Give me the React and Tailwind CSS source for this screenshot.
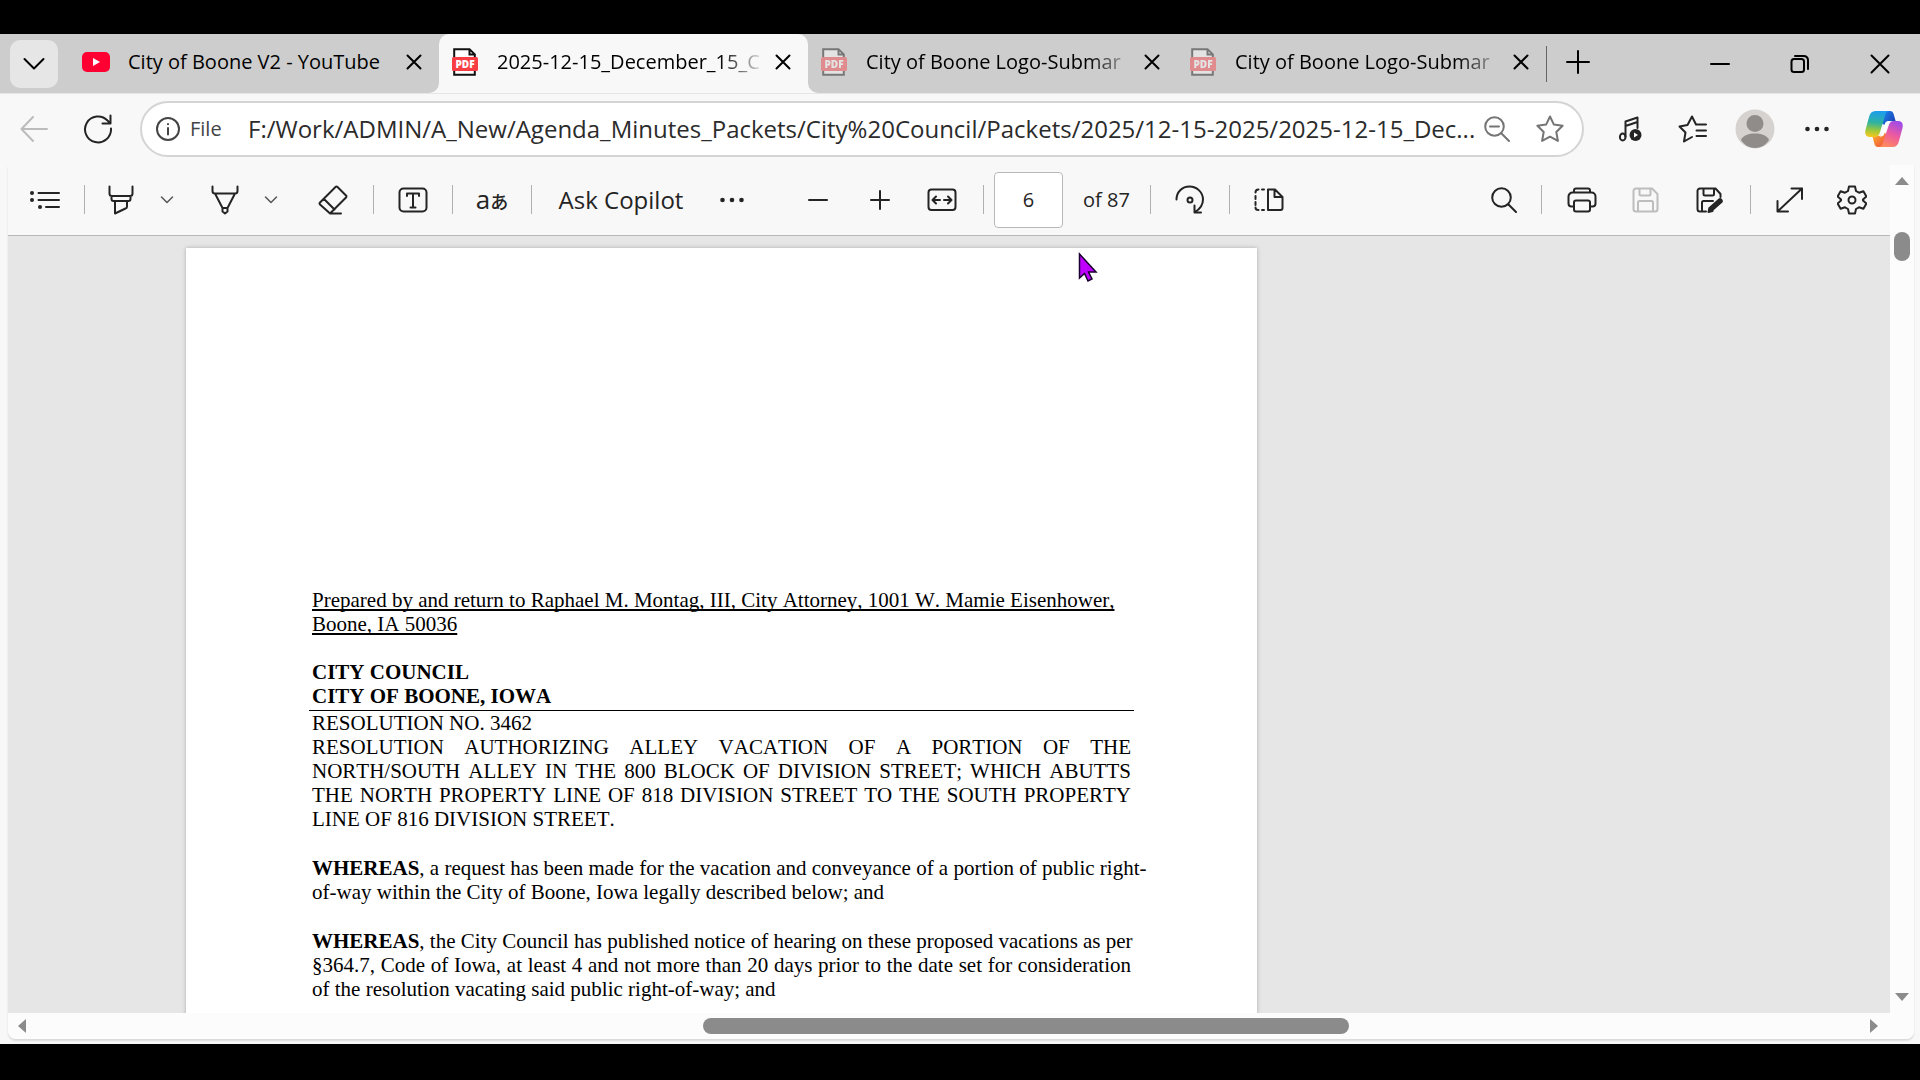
const Icon = ({ w = 28, h = 28, stroke = 2, className = "", children }) => (
  <svg
    width={w}
    height={h}
    viewBox={`0 0 ${w} ${h}`}
    fill="none"
    stroke="currentColor"
    strokeWidth={stroke}
    strokeLinecap="round"
    strokeLinejoin="round"
    className={`shrink-0 ${className}`}
    aria-hidden="true"
  >
    {children}
  </svg>
);

const CloseIcon = () => (
  <Icon w={16} h={16}>
    <path d="M1.5 1.5 14.5 14.5M14.5 1.5 1.5 14.5" />
  </Icon>
);

const ChevronIcon = () => (
  <Icon w={14} h={10} stroke={1.5} className="text-[#555]">
    <path d="M1.5 2 7 7.5 12.5 2" />
  </Icon>
);

const DotsIcon = () => (
  <Icon w={24} h={6}>
    <g fill="currentColor" stroke="none">
      <circle cx="2.5" cy="3" r="2.3" />
      <circle cx="12" cy="3" r="2.3" />
      <circle cx="21.5" cy="3" r="2.3" />
    </g>
  </Icon>
);

const StarIcon = () => (
  <Icon w={28} h={28}>
    <path d="m14 1.5 3.9 8.1 8.7 1.2-6.3 6.2 1.6 8.9-7.9-4.2-7.9 4.2 1.6-8.9-6.3-6.2 8.700-1.200z" />
  </Icon>
);

const SaveIcon = ({ editing }) => (
  <Icon w={28} h={26}>
    {editing ? (
      <>
        <path d="M24.500 10V7L19.500 1.500H4a2.500 2.500 0 0 0-2.500 2.500v18A2.500 2.500 0 0 0 4 24.500h6M7.500 1.500V7A1.500 1.500 0 0 0 9 8.500h7.500A1.500 1.500 0 0 0 18 7V1.500M6 24V15.500A1.500 1.500 0 0 1 7.500 14H17" />
        <path d="m15.500 21.500 8.500-7.500" strokeWidth="5.500" />
        <path d="m12.500 25 1-4 3 3z" fill="currentColor" />
      </>
    ) : (
      <path d="M4 24.500h19a2.500 2.500 0 0 0 2.500-2.500V7L20 1.500H4A2.500 2.500 0 0 0 1.500 4v18A2.500 2.500 0 0 0 4 24.500zM7.500 1.500V7A1.500 1.500 0 0 0 9 8.500h8A1.500 1.500 0 0 0 18.500 7V1.500M6 24.500V15.500A1.500 1.500 0 0 1 7.500 14h12a1.500 1.500 0 0 1 1.500 1.500v9" />
    )}
  </Icon>
);

const YouTubeIcon = () => (
  <svg width="28" height="20" viewBox="0 0 28 20" aria-hidden="true">
    <rect width="28" height="20" rx="5" fill="#ff0033" />
    <path d="M11 6v8l7-4z" fill="#fff" />
  </svg>
);

const PdfIcon = ({ faded }) => (
  <svg width="28" height="28" viewBox="0 0 28 28" aria-hidden="true" className={faded ? "opacity-45" : ""}>
    <path d="M3.200 1.200h15.300l5.300 5.300v20.300H3.200z" fill="#fff" stroke="#111" strokeWidth="2" />
    <path d="M17.500 1v6.500h7z" fill="#111" />
    <path d="M19.500 3.500v2h2z" fill="#fff" />
    <rect x="1" y="9" width="26" height="14" rx="1.500" fill="#f83e44" />
    <text
      x="14"
      y="19.500"
      textAnchor="middle"
      fontSize="10"
      fontWeight="800"
      fontFamily="'Open Sans', sans-serif"
      fill="#fff"
    >
      PDF
    </text>
  </svg>
);

const CopilotIcon = () => (
  <svg width="38" height="36" viewBox="0 0 38 36" aria-hidden="true">
    <defs>
      <linearGradient id="cpLeft" x1="0.5" y1="0" x2="0.4" y2="1">
        <stop offset="0" stopColor="#1b9df0" />
        <stop offset="0.45" stopColor="#2fb3a0" />
        <stop offset="0.75" stopColor="#9cc83c" />
        <stop offset="1" stopColor="#f5c81e" />
      </linearGradient>
      <linearGradient id="cpTop" x1="0" y1="0" x2="1" y2="0.6">
        <stop offset="0" stopColor="#1a8df5" />
        <stop offset="1" stopColor="#1b46b8" />
      </linearGradient>
      <linearGradient id="cpRight" x1="0.7" y1="0" x2="0.3" y2="1">
        <stop offset="0" stopColor="#a04be8" />
        <stop offset="0.5" stopColor="#ec5aa0" />
        <stop offset="1" stopColor="#ff8a5c" />
      </linearGradient>
      <linearGradient id="cpBottom" x1="0" y1="0" x2="1" y2="1">
        <stop offset="0" stopColor="#ffb52e" />
        <stop offset="1" stopColor="#ee4a3a" />
      </linearGradient>
    </defs>
    <path d="M18 0h7c2 0 3 1 3.600 3l2 7h-6c-3 0-4 1-5 4l-4-2z" fill="url(#cpTop)" />
    <path d="M20 36h-7c-2 0-3-1-3.600-3l-2-8h6c3 0 4-1 5-4l3 2z" fill="url(#cpBottom)" />
    <path d="M10.500 0H24c-2.200 0-3.200 2-4 4.700L15 21c-.8 3-2.300 5-5 5H5c-4 0-5.500-3-4.500-7L4 6c1-4 3-6 6.500-6z" fill="url(#cpLeft)" />
    <path d="M27.500 36H14c2.200 0 3.200-2 4-4.700L23.500 15c.8-3 2.300-5 5-5H33c4 0 5.500 3 4.500 7L34 30c-1 4-3 6-6.500 6z" fill="url(#cpRight)" />
    <path d="M20 12.500c1-2 2-2.500 5-2.500-1.500 1-2 2.500-2.500 4L19 23.500c-.7 1.500-1.500 2-4.500 2 1.500-1 2-2.500 2.500-4z" fill="#fff" />
  </svg>
);

const Divider = ({ tight }) => (
  <span className={`h-[29px] w-px shrink-0 bg-[#b0b0b0] ${tight ? "mx-2" : "mx-[10px]"}`} />
);

const ToolButton = ({ label, width = "w-[58px]", className = "", children }) => (
  <button
    type="button"
    aria-label={label}
    className={`flex h-12 shrink-0 items-center justify-center ${width} ${className}`}
  >
    {children}
  </button>
);

const tabs = [
  { title: "City of Boone V2 - YouTube", icon: "youtube" },
  { title: "2025-12-15_December_15_C", icon: "pdf", active: true, clipped: true },
  { title: "City of Boone Logo-Submar", icon: "pdf", clipped: true },
  { title: "City of Boone Logo-Submar", icon: "pdf", clipped: true },
];

const Tab = ({ tab }) => (
  <div
    className={`relative flex w-[369px] min-w-0 items-center pb-1 pl-3 ${
      tab.active ? "rounded-t-[10px] bg-[#f8f8f8]" : ""
    }`}
  >
    {tab.active && (
      <>
        <svg className="absolute bottom-0 -left-[10px]" width="10" height="10" viewBox="0 0 10 10">
          <path d="M10 0v10H0A10 10 0 0 0 10 0z" fill="#f8f8f8" />
        </svg>
        <svg className="absolute -right-[10px] bottom-0" width="10" height="10" viewBox="0 0 10 10">
          <path d="M0 0v10h10A10 10 0 0 1 0 0z" fill="#f8f8f8" />
        </svg>
      </>
    )}
    <span className="flex w-7 shrink-0 justify-center">
      {tab.icon === "youtube" ? <YouTubeIcon /> : <PdfIcon faded={!tab.active} />}
    </span>
    <span
      className={`ml-[18px] w-[262px] overflow-hidden whitespace-nowrap text-xl ${
        tab.clipped ? "[mask-image:linear-gradient(to_right,black_222px,transparent_270px)]" : ""
      }`}
    >
      {tab.title}
    </span>
    <button type="button" aria-label="Close tab" className="ml-3 flex h-6 w-6 shrink-0 items-center justify-center">
      <CloseIcon />
    </button>
  </div>
);

const TabStrip = () => (
  <div className="flex h-[59px] shrink-0 bg-[#cdcdcd] text-black">
    <button
      type="button"
      aria-label="Tab actions"
      className="mt-1.5 mr-3 ml-2.5 flex h-12 w-12 shrink-0 items-center justify-center rounded-[10px] bg-[#e6e6e6]"
    >
      <Icon w={22} h={14}>
        <path d="M1.500 2 11 11.500 20.500 2" />
      </Icon>
    </button>
    {tabs.map((tab, i) => (
      <Tab key={i} tab={tab} />
    ))}
    <button type="button" aria-label="New tab" className="relative flex w-16 shrink-0 items-center justify-center pb-1">
      <span className="absolute top-3 left-0 h-9 w-px bg-[#666]" />
      <Icon w={24} h={24}>
        <path d="M12 1v22M1 12h22" />
      </Icon>
    </button>
    <div className="ml-auto flex">
      <button type="button" aria-label="Minimize" className="flex w-20 items-center justify-center">
        <Icon w={20} h={20}>
          <path d="M1 10h18" />
        </Icon>
      </button>
      <button type="button" aria-label="Restore" className="flex w-20 items-center justify-center">
        <Icon w={20} h={20}>
          <rect x="1.500" y="5" width="12.500" height="13" rx="2.500" />
          <path d="M5 2h8.500c3 0 4.500 1.500 4.500 4.500V15" />
        </Icon>
      </button>
      <button type="button" aria-label="Close" className="flex w-20 items-center justify-center">
        <Icon w={20} h={20}>
          <path d="M1.500 1.500 18.500 18.500M18.500 1.500 1.500 18.500" />
        </Icon>
      </button>
    </div>
  </div>
);

const AddressRow = () => (
  <div className="flex h-[72px] shrink-0 items-center border-t border-[#e6e6e6] pb-0.5 pl-0.5">
    <ToolButton label="Back" width="w-16" className="text-[#bcbcbc]">
      <Icon w={28} h={26}>
        <path d="M13 1 1.500 13 13 25M1.500 13H27" />
      </Icon>
    </ToolButton>
    <ToolButton label="Refresh" width="w-16">
      <Icon w={30} h={30}>
        <path d="M28 14.500A13 13 0 1 1 24.500 6.500L27.500 9.500M27.500 1.500v8h-8" />
      </Icon>
    </ToolButton>
    <div className="ml-[10px] flex h-14 min-w-0 flex-1 items-center rounded-full border-2 border-[#d4d4d4] bg-white pl-[14px]">
      <Icon w={24} h={24} className="text-[#444]">
        <circle cx="12" cy="12" r="11" />
        <path d="M12 11v6.500M12 7v.2" />
      </Icon>
      <label htmlFor="url" className="w-[68px] shrink-0 pl-[10px] text-xl font-medium text-[#444]">
        File
      </label>
      <input
        id="url"
        className="min-w-0 flex-1 bg-transparent text-2xl text-[#2b2b2b] outline-none"
        defaultValue="F:/Work/ADMIN/A_New/Agenda_Minutes_Packets/City%20Council/Packets/2025/12-15-2025/2025-12-15_Dec..."
      />
      <ToolButton label="Zoom" width="w-[42px]" className="text-[#757575]">
        <Icon w={26} h={26}>
          <circle cx="10.500" cy="10.500" r="9.300" />
          <path d="M17.500 17.500 25 25M6 10.500h9" />
        </Icon>
      </ToolButton>
      <ToolButton label="Add to favorites" width="w-16" className="text-[#757575]">
        <StarIcon />
      </ToolButton>
    </div>
    <ToolButton label="Media" width="w-[62px]" className="ml-4">
      <Icon w={24} h={26}>
        <path d="M6.500 20.500V5.500L18.500 1.500V12M6.500 10 18.500 6" />
        <ellipse cx="3.700" cy="21" rx="2.800" ry="3.500" />
        <circle cx="16.500" cy="19" r="6" fill="currentColor" stroke="none" />
        <path d="M15 16.500v5l4-2.500z" fill="#fff" stroke="none" />
      </Icon>
    </ToolButton>
    <ToolButton label="Favorites" width="w-[62px]">
      <Icon w={30} h={28}>
        <path d="M14 22 6 26.500 7.500 17.500 1.500 11.500 9.500 10 14 1.500 18 9.500H28M18.500 15.500H28M18.500 21H28" />
      </Icon>
    </ToolButton>
    <ToolButton label="Profile" width="w-[62px]">
      <svg width="40" height="40" viewBox="0 0 40 40" aria-hidden="true">
        <circle cx="20" cy="20" r="19.500" fill="#d5d2d0" />
        <circle cx="20" cy="14.500" r="8.500" fill="#8f8c8a" />
        <path d="M6 31c2-5 8-6.500 14-6.500S32 26 34 31c-3 5-8.500 8-14 8S9 36 6 31z" fill="#8f8c8a" />
      </svg>
    </ToolButton>
    <ToolButton label="Settings and more" width="w-[62px]">
      <DotsIcon />
    </ToolButton>
    <ToolButton label="Copilot" width="w-[72px]">
      <CopilotIcon />
    </ToolButton>
  </div>
);

const PdfToolbar = () => (
  <div className="flex h-[71px] shrink-0 items-center border-b border-[#b8b8b8] pr-[7px] pb-px pl-2">
    <ToolButton label="Contents">
      <Icon w={30} h={20}>
        <path d="M8.500 3H29M8.500 10H29M16 17H29" />
        <g fill="currentColor" stroke="none">
          <circle cx="2" cy="3" r="2" />
          <circle cx="2" cy="10" r="2" />
          <circle cx="10" cy="17" r="2" />
        </g>
      </Icon>
    </ToolButton>
    <Divider />
    <ToolButton label="Highlight" width="w-[52px]">
      <Icon w={26} h={30}>
        <path d="M1.500 1.500v7a2.500 2.500 0 0 0 2.500 2.500h18a2.500 2.500 0 0 0 2.500-2.500v-7M3.500 11v3a2 2 0 0 0 2 2h15a2 2 0 0 0 2-2v-3M7 16v12.500l10.500-5a2 2 0 0 0 1.500-2V16" />
      </Icon>
    </ToolButton>
    <ToolButton label="Highlight options" width="w-10">
      <ChevronIcon />
    </ToolButton>
    <ToolButton label="Draw" width="w-[52px]" className="ml-3">
      <Icon w={28} h={30}>
        <path d="M1.500 1.500v4.500a2.500 2.500 0 0 0 2.500 2.500h20a2.500 2.500 0 0 0 2.500-2.500V1.500M4 8.500 11.500 23h5L24 8.500M11.500 23v3.500l2.500 2 2.500-2V23" />
      </Icon>
    </ToolButton>
    <ToolButton label="Draw options" width="w-10">
      <ChevronIcon />
    </ToolButton>
    <ToolButton label="Erase" width="w-[60px]" className="ml-3">
      <Icon w={30} h={30}>
        <path d="M12 28.500H23M11.500 28 2 19.500a1.500 1.500 0 0 1 0-2L17.500 2a1.500 1.500 0 0 1 2 0L28 10.500a1.500 1.500 0 0 1 0 2L12.500 28a1 1 0 0 1-1 0zM6 14 16.500 24.500" />
      </Icon>
    </ToolButton>
    <Divider />
    <ToolButton label="Add text">
      <Icon w={30} h={26}>
        <rect x="1.500" y="1.500" width="27" height="23" rx="4" />
        <path d="M9 9V6.500h12V9M15 6.500v14M12.500 20.500h5" />
      </Icon>
    </ToolButton>
    <Divider />
    <ToolButton label="Translate">
      <span className="flex items-baseline">
        <span className="text-[26px] leading-7">a</span>
        <span className="font-['Noto_Sans_CJK_JP',sans-serif] text-lg leading-7 font-medium">あ</span>
      </span>
    </ToolButton>
    <Divider />
    <button type="button" className="h-12 w-[158px] shrink-0 text-2xl">
      Ask Copilot
    </button>
    <ToolButton label="More" width="w-[63px]">
      <DotsIcon />
    </ToolButton>
    <ToolButton label="Zoom out" width="w-[62px]" className="ml-6">
      <Icon w={20} h={20}>
        <path d="M1 10h18" />
      </Icon>
    </ToolButton>
    <ToolButton label="Zoom in" width="w-[62px]">
      <Icon w={20} h={20}>
        <path d="M1 10h18M10 1v18" />
      </Icon>
    </ToolButton>
    <ToolButton label="Fit to width" width="w-[62px]">
      <Icon w={30} h={24}>
        <rect x="1.500" y="1.500" width="27" height="20.500" rx="3" />
        <path d="M13 12H6M9 8.500 5.500 12 9 15.500M17 12h7M21 8.500 24.500 12 21 15.500" />
      </Icon>
    </ToolButton>
    <Divider />
    <input
      id="page"
      defaultValue="6"
      className="h-14 w-[69px] shrink-0 rounded border border-[#b8b8b8] bg-white text-center text-xl"
    />
    <label htmlFor="page" className="ml-5 w-[57px] shrink-0 text-xl whitespace-nowrap">
      of 87
    </label>
    <Divider />
    <ToolButton label="Rotate">
      <Icon w={30} h={30}>
        <path d="M1.500 14.500C1.500 7 7 1.500 14.500 1.500S28 7.500 28 14.500c0 5-3 9.500-8 12.500M19.500 20.500v7H26" />
        <circle cx="15" cy="15" r="2.500" />
      </Icon>
    </ToolButton>
    <Divider />
    <ToolButton label="Page view">
      <Icon w={30} h={24}>
        <path d="M14 1.500h7L28.500 9v11a2 2 0 0 1-2 2H14zM20.500 1.500V9h8" />
        <path d="M10 1.500H8M4.500 1.500C2.500 1.500 1.500 2.500 1.500 4.500M1.500 8v3M1.500 14v3M1.500 19.500c0 1.500 1 2.500 3 2.500M8 22h2" />
      </Icon>
    </ToolButton>
    <div className="ml-auto flex items-center">
      <ToolButton label="Search">
        <Icon w={26} h={26}>
          <circle cx="10.500" cy="10.500" r="9.300" />
          <path d="M17.500 17.500 25 25" />
        </Icon>
      </ToolButton>
      <Divider tight />
      <ToolButton label="Print" width="w-16">
        <Icon w={30} h={26}>
          <path d="M7 19.500H4.500a3 3 0 0 1-3-3V9.500a4 4 0 0 1 4-4h19a4 4 0 0 1 4 4v7a3 3 0 0 1-3 3H23M7 5.500V3.500a2 2 0 0 1 2-2h12a2 2 0 0 1 2 2v2" />
          <rect x="7" y="13.500" width="16" height="11" rx="2" />
        </Icon>
      </ToolButton>
      <ToolButton label="Save" width="w-16" className="text-[#bdbdbd]">
        <SaveIcon />
      </ToolButton>
      <ToolButton label="Save as" width="w-16">
        <SaveIcon editing />
      </ToolButton>
      <Divider tight />
      <ToolButton label="Full screen" width="w-[62px]">
        <Icon w={28} h={26}>
          <path d="M1.500 24.500 26 1.500M15.500 1.500H26V12M1.500 14v10.500H12" />
        </Icon>
      </ToolButton>
      <ToolButton label="Viewer settings" width="w-[62px]">
        <Icon w={30} h={30}>
          <path d="M12 1.500h6l1 4.500 3 1.700 4.400-1.400 3 5.200-3.400 3.100v.8l3.400 3.100-3 5.200L22 22.300 19 24l-1 4.500h-6L11 24l-3-1.700-4.400 1.400-3-5.200L4 15.400v-.8L.6 11.500l3-5.200L8 7.700 11 6z" />
          <circle cx="15" cy="15" r="3.500" />
        </Icon>
      </ToolButton>
    </div>
  </div>
);

// Each clause keeps the line breaks of the scanned packet
const clauses = [
  [
    ", a request has been made for the vacation and conveyance of a portion of public right-",
    "of-way within the City of Boone, Iowa legally described below; and",
  ],
  [
    ", the City Council has published notice of hearing on these proposed vacations as per",
    "§364.7, Code of Iowa, at least 4 and not more than 20 days prior to the date set for consideration",
    "of the resolution vacating said public right-of-way; and",
  ],
];

const Clause = ({ lines }) => (
  <p className="mt-[25px] whitespace-nowrap">
    {lines.map((line, i) => (
      <span key={line} className={`block ${i < lines.length - 1 ? "[text-align-last:justify]" : ""}`}>
        {i === 0 && <strong>WHEREAS</strong>}
        {line}
      </span>
    ))}
  </p>
);

const DocumentPage = () => (
  <article className="mt-3 ml-[178px] min-h-[1387px] w-[1071px] shrink-0 bg-white px-[126px] pt-[340px] font-['Liberation_Serif',serif] text-[21px] leading-6 text-black shadow-[0_0_4px_rgba(0,0,0,0.25)] [font-kerning:none]">
    <p className="underline decoration-2 underline-offset-2 [text-decoration-skip-ink:none]">
      Prepared by and return to Raphael M. Montag, III, City Attorney, 1001 W. Mamie Eisenhower, Boone, IA 50036
    </p>
    <h1 className="-mx-[3px] mt-6 border-b border-black px-[3px] pb-0.5 font-bold">
      CITY COUNCIL
      <br />
      CITY OF BOONE, IOWA
    </h1>
    <p>RESOLUTION NO. 3462</p>
    <p className="text-justify">
      RESOLUTION AUTHORIZING ALLEY VACATION OF A PORTION OF THE NORTH/SOUTH ALLEY IN THE 800 BLOCK OF DIVISION
      STREET; WHICH ABUTTS THE NORTH PROPERTY LINE OF 818 DIVISION STREET TO THE SOUTH PROPERTY LINE OF 816 DIVISION
      STREET.
    </p>
    {clauses.map((lines) => (
      <Clause key={lines[0]} lines={lines} />
    ))}
  </article>
);

const VerticalScrollbar = () => (
  <div className="flex w-6 shrink-0 flex-col items-center bg-[#fcfcfc] text-[#8b8b8b]">
    <button type="button" aria-label="Scroll up" className="flex h-8 w-6 items-center justify-center">
      <svg width="14" height="8" viewBox="0 0 14 8">
        <path d="M0 8 7 0l7 8z" fill="currentColor" />
      </svg>
    </button>
    <div className="mt-[35px] h-[29px] w-4 rounded-full bg-[#8b8b8b]" />
    <button type="button" aria-label="Scroll down" className="mt-auto flex h-8 w-6 items-center justify-center">
      <svg width="14" height="8" viewBox="0 0 14 8">
        <path d="M0 0 7 8l7-8z" fill="currentColor" />
      </svg>
    </button>
  </div>
);

const HorizontalScrollbar = () => (
  <div className="flex h-[26px] shrink-0 items-center bg-[#fcfcfc] pr-6 text-[#8b8b8b]">
    <button type="button" aria-label="Scroll left" className="flex h-6 w-7 shrink-0 items-center justify-center">
      <svg width="8" height="14" viewBox="0 0 8 14">
        <path d="M8 0 0 7l8 7z" fill="currentColor" />
      </svg>
    </button>
    <div className="flex flex-1">
      <span className="grow-[667] basis-0" />
      <span className="h-4 grow-[645] basis-0 rounded-full bg-[#8b8b8b]" />
      <span className="grow-[509] basis-0" />
    </div>
    <button type="button" aria-label="Scroll right" className="flex h-6 w-8 shrink-0 items-center justify-center">
      <svg width="8" height="14" viewBox="0 0 8 14">
        <path d="M0 0v14l8-7z" fill="currentColor" />
      </svg>
    </button>
  </div>
);

const App = () => {
  return (
    <div className="flex h-screen flex-col bg-black pt-[34px] pb-9 font-['Open_Sans','Noto_Sans',sans-serif]">
      <div className="flex min-h-0 flex-1 flex-col bg-[#f8f8f8] pb-[5px] text-[#242424]">
        <TabStrip />
        <AddressRow />
        <main className="mr-1.5 ml-2 flex min-h-0 flex-1 flex-col overflow-hidden rounded-b-lg shadow-[0_2px_2px_rgba(0,0,0,0.12)]">
          <div className="flex min-h-0 flex-1">
            <div className="flex min-w-0 flex-1 flex-col">
              <PdfToolbar />
              <div className="relative flex min-h-0 flex-1 items-start overflow-hidden bg-[#e6e6e6]">
                <DocumentPage />
                {/* Mouse pointer */}
                <svg
                  className="absolute top-4 left-[1070px]"
                  width="21"
                  height="30"
                  viewBox="0 0 21 30"
                  aria-hidden="true"
                >
                  <path
                    d="M1.500 2v24l5-4.500 3.500 7.500 4-2-3.500-7h7.500z"
                    fill="#bf00ff"
                    stroke="#1a0030"
                    strokeWidth="1.500"
                  />
                </svg>
              </div>
            </div>
            <VerticalScrollbar />
          </div>
          <HorizontalScrollbar />
        </main>
      </div>
    </div>
  );
};

export default App;
